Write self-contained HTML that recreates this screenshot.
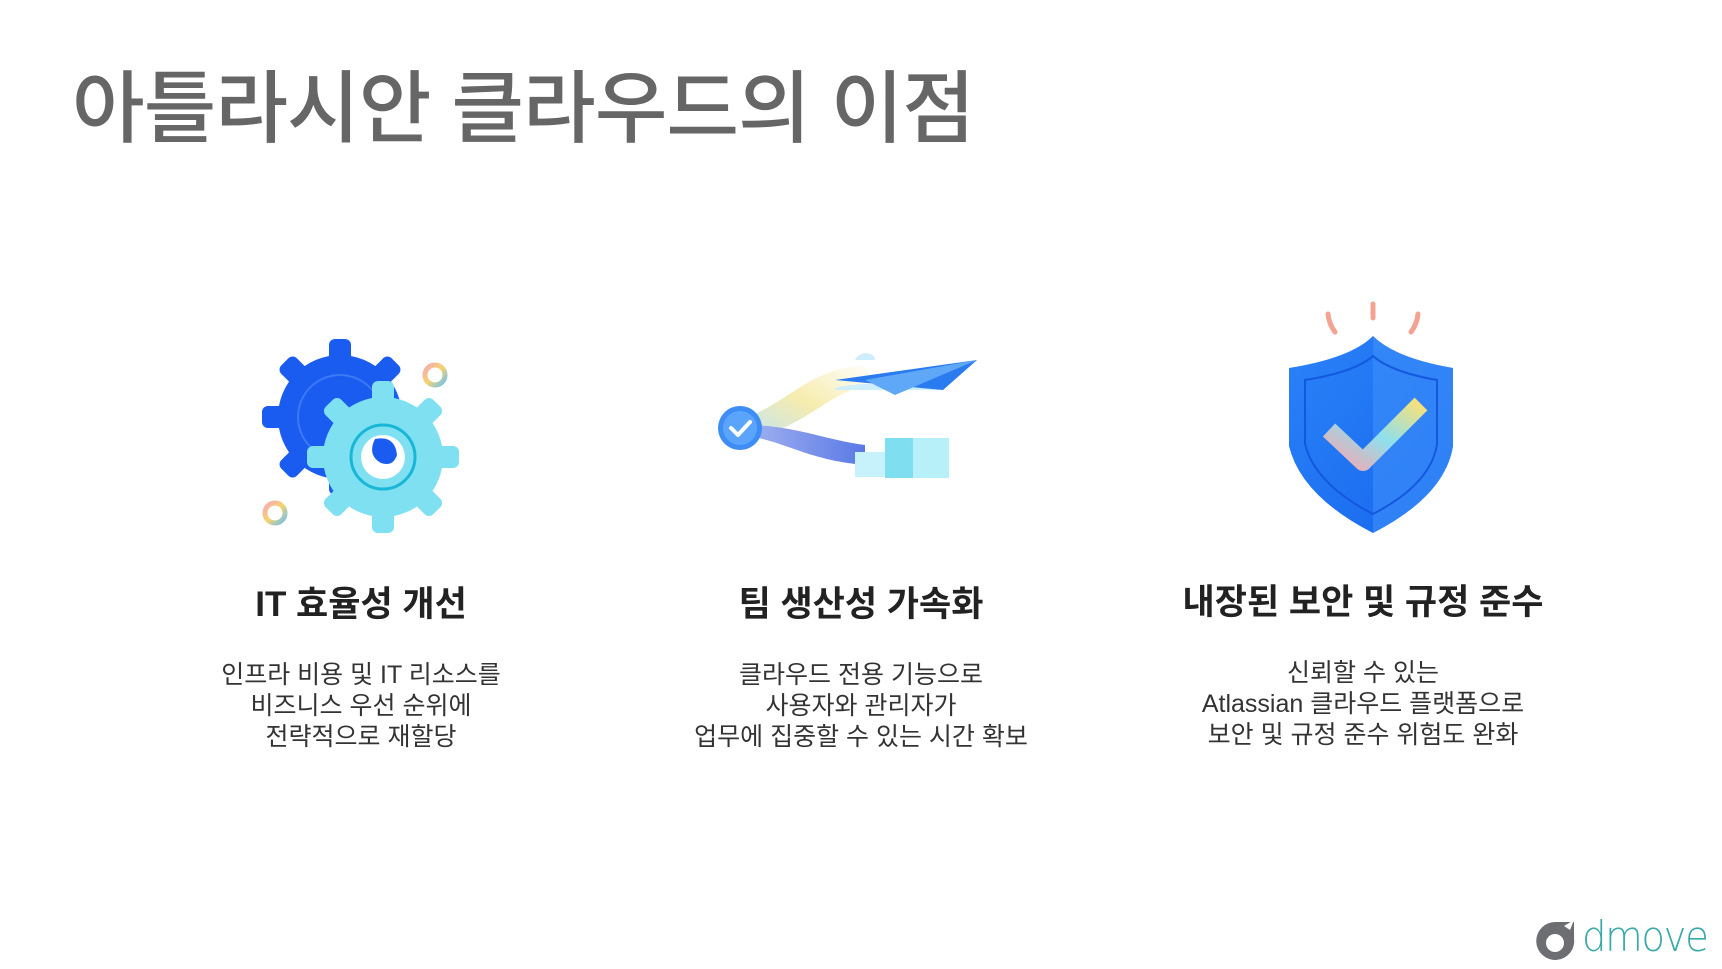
<!DOCTYPE html>
<html><head><meta charset="utf-8"><style>
html,body{margin:0;padding:0;background:#fff;}
body{width:1722px;height:969px;position:relative;overflow:hidden;font-family:"Liberation Sans","Noto Sans CJK KR",sans-serif;}
h1{position:absolute;left:72px;top:44px;margin:0;font-size:79px;font-weight:500;color:#666;letter-spacing:-1px;font-family:"Liberation Sans","Noto Sans CJK KR",sans-serif;}
.col{position:absolute;width:500px;text-align:center;color:#222;}
.col h2{margin:0;font-size:35px;font-weight:700;line-height:50px;}
.col p{margin:30px 0 0;font-size:25px;line-height:31px;color:#333;font-weight:400;}
svg{position:absolute;}
</style></head><body>
<h1>아틀라시안 클라우드의 이점</h1>

<svg style="left:255px;top:335px" width="210" height="205" viewBox="0 0 210 205">
<defs><linearGradient id="sw" x1="0" y1="0" x2="1" y2="1"><stop offset="0" stop-color="#f7a9b5"/><stop offset=".5" stop-color="#f6d46c"/><stop offset="1" stop-color="#6dc0f0"/></linearGradient></defs>
<g fill="#1a5cf0">
<circle cx="85" cy="82" r="62"/>
<g transform="translate(85,82)">
<rect x="-11" y="-78" width="22" height="24" rx="6"/><rect x="-11" y="54" width="22" height="24" rx="6"/>
<rect x="-78" y="-11" width="24" height="22" rx="6"/><rect x="54" y="-11" width="24" height="22" rx="6"/>
<g transform="rotate(45)"><rect x="-11" y="-78" width="22" height="24" rx="6"/><rect x="-11" y="54" width="22" height="24" rx="6"/><rect x="-78" y="-11" width="24" height="22" rx="6"/><rect x="54" y="-11" width="24" height="22" rx="6"/></g>
</g></g>
<circle cx="85" cy="82" r="42" fill="none" stroke="#3d78f5" stroke-width="2"/>
<g fill="#7fe0f2">
<circle cx="128" cy="122" r="60"/>
<g transform="translate(128,122)">
<rect x="-11" y="-76" width="22" height="24" rx="6"/><rect x="-11" y="52" width="22" height="24" rx="6"/>
<rect x="-76" y="-11" width="24" height="22" rx="6"/><rect x="52" y="-11" width="24" height="22" rx="6"/>
<g transform="rotate(45)"><rect x="-11" y="-76" width="22" height="24" rx="6"/><rect x="-11" y="52" width="22" height="24" rx="6"/><rect x="-76" y="-11" width="24" height="22" rx="6"/><rect x="52" y="-11" width="24" height="22" rx="6"/></g>
</g></g>
<circle cx="128" cy="122" r="32" fill="none" stroke="#1ab6d6" stroke-width="3"/>
<circle cx="128" cy="122" r="22" fill="#fff"/>
<path d="M120 104 Q140 100 142 120 Q138 132 126 128 Q112 120 120 104Z" fill="#1a5cf0"/>
<circle cx="180" cy="40" r="10" fill="none" stroke="url(#sw)" stroke-width="5"/>
<circle cx="20" cy="178" r="10" fill="none" stroke="url(#sw)" stroke-width="5"/>
</svg>

<svg style="left:715px;top:340px" width="290" height="160" viewBox="0 0 290 160">
<defs>
<linearGradient id="rb" x1="0" y1="1" x2="1" y2="0"><stop offset="0" stop-color="#bfe4f7"/><stop offset=".5" stop-color="#f6ecae"/><stop offset="1" stop-color="#fff"/></linearGradient>
<linearGradient id="bl" x1="0" y1="0" x2="1" y2="0"><stop offset="0" stop-color="#a6b5f0"/><stop offset="1" stop-color="#5a79e6"/></linearGradient>
</defs>
<path d="M25 80 C80 60 90 30 150 25 L160 45 C110 50 100 85 30 100Z" fill="url(#rb)"/>
<path d="M25 95 C70 100 90 120 150 125 L150 105 C110 100 80 85 30 85Z" fill="url(#bl)"/>
<rect x="140" y="112" width="30" height="25" fill="#c7f1fb"/>
<rect x="170" y="98" width="30" height="40" fill="#7fdff0"/>
<rect x="198" y="98" width="36" height="40" fill="#b7f0f9"/>
<path d="M120 48 C140 42 170 45 200 40 C205 30 215 32 220 40 C228 40 230 48 225 50 L120 50Z" fill="#cdeefa"/>
<path d="M140 20 C145 10 160 12 160 20Z" fill="#cdeefa"/>
<path d="M120 40 L262 20 L228 50Z" fill="#2a7af0"/>
<path d="M150 40 L262 20 L180 55Z" fill="#5fa8f8"/>
<circle cx="25" cy="88" r="22" fill="#3d8df5"/>
<circle cx="25" cy="88" r="17" fill="#5aa5fb"/>
<path d="M16 88 L23 95 L35 82" fill="none" stroke="#fff" stroke-width="4" stroke-linecap="round" stroke-linejoin="round"/>
</svg>

<svg style="left:1285px;top:296px" width="180" height="242" viewBox="0 0 180 242">
<defs>
<linearGradient id="sh" x1="0" y1="0" x2="1" y2="1"><stop offset="0" stop-color="#2a82f7"/><stop offset="1" stop-color="#1767ee"/></linearGradient>
<linearGradient id="ck" x1="0" y1="1" x2="1" y2="0"><stop offset="0" stop-color="#f5a7b0"/><stop offset=".5" stop-color="#8ee0ee"/><stop offset="1" stop-color="#f7e17a"/></linearGradient>
</defs>
<g stroke="#f4a292" stroke-width="5" stroke-linecap="round" fill="none">
<path d="M43 18 Q44 28 50 36"/><path d="M88 8 L88 22"/><path d="M133 18 Q132 28 126 36"/>
</g>
<path d="M88 40 Q110 62 168 72 L168 150 Q160 200 88 237 Q16 200 4 150 L4 72 Q66 62 88 40Z" fill="url(#sh)"/>
<path d="M88 40 Q110 62 168 72 L168 150 Q160 200 88 237Z" fill="#3d90fa" opacity=".6"/>
<path d="M88 60 Q106 76 152 84 L152 148 Q146 188 88 218 Q30 188 20 148 L20 84 Q70 76 88 60Z" fill="none" stroke="#1458e0" stroke-width="2"/>
<path d="M44 134 L78 166 L136 108" fill="none" stroke="url(#ck)" stroke-width="18" stroke-linejoin="round"/>
</svg>

<div class="col" style="left:111px;top:580px"><h2>IT 효율성 개선</h2><p>인프라 비용 및 IT 리소스를<br>비즈니스 우선 순위에<br>전략적으로 재할당</p></div>
<div class="col" style="left:611px;top:580px"><h2>팀 생산성 가속화</h2><p>클라우드 전용 기능으로<br>사용자와 관리자가<br>업무에 집중할 수 있는 시간 확보</p></div>
<div class="col" style="left:1113px;top:578px"><h2>내장된 보안 및 규정 준수</h2><p>신뢰할 수 있는<br>Atlassian 클라우드 플랫폼으로<br>보안 및 규정 준수 위험도 완화</p></div>

<svg style="left:1534px;top:916px" width="44" height="48" viewBox="0 0 44 48">
<path d="M22 6 A19 19 0 1 0 40 22 L40 6 Z" fill="#6d6e71"/>
<circle cx="21" cy="27" r="9" fill="#fff"/>
<path d="M30 10 L40 4 L36 14Z" fill="#fff"/>
</svg>
<div style="position:absolute;left:1582px;top:912px;font-size:42px;color:#3aa9a9;letter-spacing:-1.5px;font-family:'DejaVu Sans','Liberation Sans',sans-serif;font-weight:200;transform:scaleX(0.92);transform-origin:left top">dmove</div>
</body></html>
